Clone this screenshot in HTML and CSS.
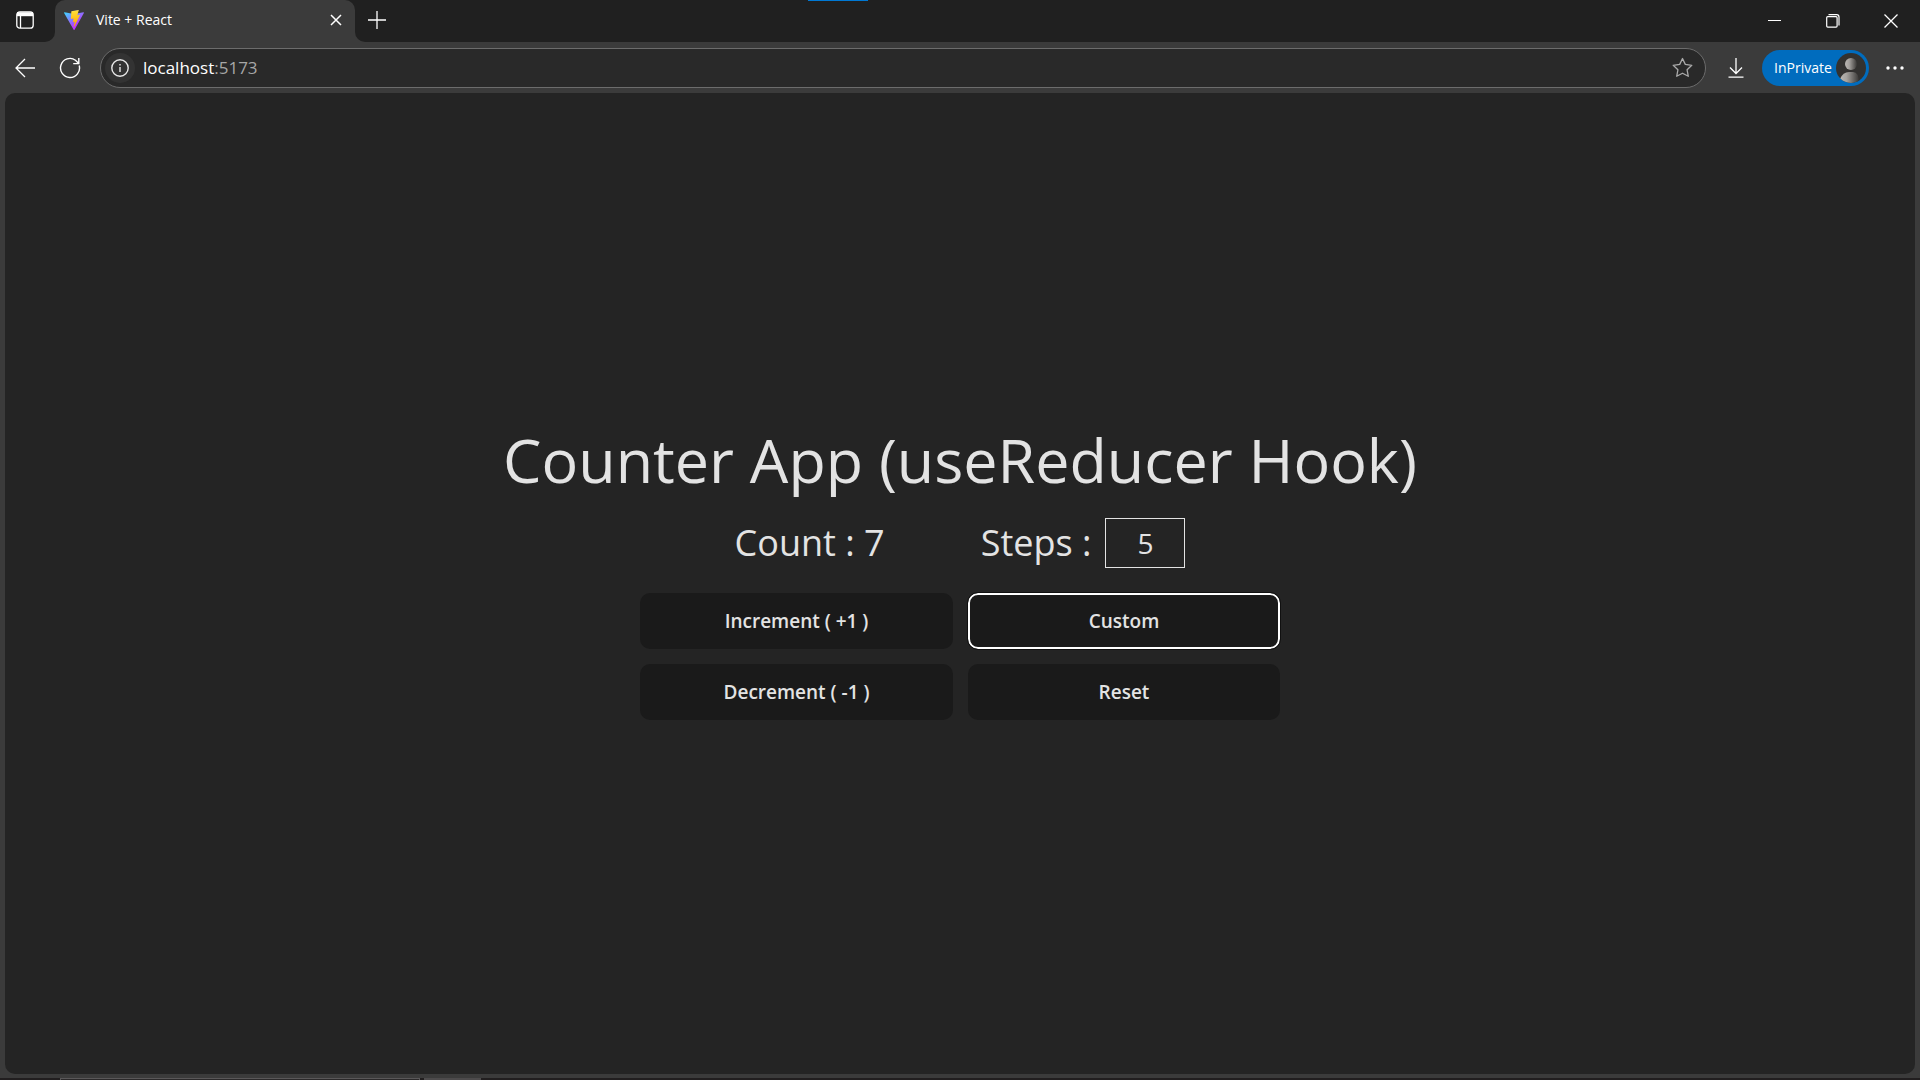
FILE: index.html
```html
<!DOCTYPE html>
<html lang="en">
<head>
<meta charset="utf-8">
<meta name="viewport" content="width=device-width, initial-scale=1">
<title>Vite + React</title>
<link rel="stylesheet" href="styles.css">
</head>
<body>
<div class="browser">
  <header class="tabbar">
    <div class="actions">
      <button class="icon-btn" aria-label="Tab actions">
        <svg width="18" height="18" viewBox="0 0 18 18" fill="none" stroke="#fff" stroke-width="1.3"><rect x=".8" y=".8" width="16.4" height="16.4" rx="3"/><path d="M1 3.2h16" stroke-width="4"/><path d="M4.5 5v12"/></svg>
      </button>
    </div>
    <div class="tab">
      <svg class="favicon" width="20" height="20" viewBox="0 0 256 257">
        <defs>
          <linearGradient id="va" x1="-1%" x2="58%" y1="8%" y2="79%"><stop offset="0" stop-color="#41d1ff"/><stop offset="1" stop-color="#bd34fe"/></linearGradient>
          <linearGradient id="vb" x1="43%" x2="50%" y1="2%" y2="89%"><stop offset="0" stop-color="#ffea83"/><stop offset=".08" stop-color="#ffdd35"/><stop offset="1" stop-color="#ffa800"/></linearGradient>
        </defs>
        <path fill="url(#va)" d="M255.153 37.938 134.897 252.976c-2.483 4.44-8.862 4.466-11.382.048L.875 37.958c-2.746-4.814 1.371-10.646 6.827-9.67l120.385 21.517a6.537 6.537 0 0 0 2.322-.004l117.867-21.483c5.438-.991 9.574 4.796 6.877 9.62Z"/>
        <path fill="url(#vb)" d="M185.432.063 96.44 17.501a3.268 3.268 0 0 0-2.634 3.014l-5.474 92.456a3.268 3.268 0 0 0 3.997 3.378l24.777-5.718c2.318-.535 4.413 1.507 3.936 3.838l-7.361 36.047c-.495 2.426 1.782 4.5 4.151 3.78l15.304-4.649c2.372-.72 4.652 1.36 4.15 3.788l-11.698 56.621c-.732 3.542 3.979 5.473 5.943 2.437l1.313-2.028 72.516-144.72c1.215-2.423-.88-5.186-3.54-4.672l-25.505 4.922c-2.396.462-4.435-1.77-3.759-4.114l16.646-57.705c.677-2.35-1.37-4.583-3.769-4.113Z"/>
      </svg>
      <span class="tab-title">Vite + React</span>
      <button class="icon-btn" aria-label="Close tab">
        <svg width="12" height="12" viewBox="0 0 12 12" stroke="#fff" stroke-width="1.5"><path d="m1 1 10 10M11 1 1 11"/></svg>
      </button>
    </div>
    <button class="icon-btn new-tab" aria-label="New tab">
      <svg width="18" height="18" viewBox="0 0 18 18" stroke="#fff" stroke-width="1.3"><path d="M9 0v18M0 9h18"/></svg>
    </button>
    <div class="window-controls">
      <button class="icon-btn" aria-label="Minimize"><svg width="14" height="14" viewBox="0 0 14 14" stroke="#fff"><path d="M0 6.5h13"/></svg></button>
      <button class="icon-btn" aria-label="Restore"><svg width="14" height="14" viewBox="0 0 14 14" fill="none" stroke="#fff" stroke-width="1.2"><rect x=".7" y="2.7" width="10.4" height="10.4" rx="1"/><path d="M2.5.7h8.2q2.3 0 2.3 2.3v8.5"/></svg></button>
      <button class="icon-btn" aria-label="Close"><svg width="14" height="14" viewBox="0 0 14 14" stroke="#fff" stroke-width="1.3"><path d="m.5.5 13 13M13.5.5l-13 13"/></svg></button>
    </div>
    <span class="snap-mark"></span>
  </header>

  <nav class="toolbar">
    <button class="icon-btn" aria-label="Back"><svg width="20" height="20" viewBox="0 0 20 20" fill="none" stroke="#fff" stroke-width="1.3"><path d="M20 10H.8M10 1 1 10l9 9"/></svg></button>
    <button class="icon-btn refresh" aria-label="Refresh"><svg width="22" height="22" viewBox="0 0 22 22" fill="none" stroke="#fff" stroke-width="1.4"><path d="M20.2 8.5A9.5 9.5 0 1 1 16.5 3.2L19.5 6.2M19.8 1v5.6h-5.6"/></svg></button>
    <div class="address">
      <button class="site-info" aria-label="Site information"><svg width="18" height="18" viewBox="0 0 18 18" fill="none" stroke="#e8e8e8" stroke-width="1.4"><circle cx="9" cy="9" r="8.2"/><path d="M9 8v5M9 5v1.6"/></svg></button>
      <a class="url" href="#">localhost<span class="port">:5173</span></a>
      <button class="icon-btn" aria-label="Add to favorites"><svg width="21" height="21" viewBox="0 0 21 21" fill="none" stroke="#aaa" stroke-width="1.3" stroke-linejoin="round"><path d="m10.5 1.5 2.8 5.9 6.5.9-4.7 4.5 1.2 6.5-5.8-3.1-5.8 3.1 1.2-6.5L1.2 8.3l6.5-.9Z"/></svg></button>
    </div>
    <button class="icon-btn download" aria-label="Downloads"><svg width="16" height="20" viewBox="0 0 16 20" fill="none" stroke="#fff" stroke-width="1.3"><path d="M8 0v15M2 9.5l6 6 6-6M.5 19.2h15"/></svg></button>
    <button class="profile">InPrivate
      <svg width="30" height="30" viewBox="0 0 30 30">
        <defs><linearGradient id="pg"><stop offset="0" stop-color="#bbb8b4"/><stop offset=".35" stop-color="#a5a29e"/><stop offset="1" stop-color="#383735"/></linearGradient><clipPath id="pc"><circle cx="15" cy="15" r="15"/></clipPath></defs>
        <circle cx="15" cy="15" r="15" fill="#333230"/><g fill="url(#pg)" clip-path="url(#pc)"><circle cx="15" cy="11" r="6"/><path d="M4 26q3-7 9-7h4q6 0 6 11H4Z"/></g>
      </svg>
    </button>
    <button class="icon-btn more" aria-label="Settings and more"><svg width="18" height="4" viewBox="0 0 18 4" fill="#fff"><circle cx="2" cy="2" r="1.7"/><circle cx="9" cy="2" r="1.7"/><circle cx="16" cy="2" r="1.7"/></svg></button>
  </nav>

  <main class="page">
    <h1>Counter App (useReducer Hook)</h1>
    <div class="values">
      <p class="count">Count : 7</p>
      <div class="steps"><label for="steps">Steps :</label><input id="steps" type="text" value="5"></div>
    </div>
    <div class="buttons">
      <button>Increment ( +1 )</button>
      <button class="focused">Custom</button>
      <button>Decrement ( -1 )</button>
      <button>Reset</button>
    </div>
  </main>
  <footer class="taskbar"><span class="task wide"></span><span class="task"></span></footer>
</div>
</body>
</html>
```
FILE: styles.css
```css
* { box-sizing: border-box; }
body { margin: 0; background: #3b3b3b; color: #fff; font-family: "Segoe UI", "Open Sans", sans-serif; }
button, input { font: inherit; color: inherit; }
.browser { min-height: 100vh; display: flex; flex-direction: column; }
.icon-btn { display: flex; align-items: center; justify-content: center; padding: 0; border: 0; background: none; flex: none; }

.tabbar { position: relative; display: flex; height: 42px; background: #3b3b3b; }
.actions { width: 55px; background: #202020; border-bottom-right-radius: 10px; display: flex; padding: 0 0 2px 16px; }
.tab { width: 300px; display: flex; align-items: center; padding: 0 13px 2px 9px; gap: 12px; background: #3b3b3b; }
.tabbar::before { content: ""; position: absolute; inset: 0 0 20px; background: #202020; }
.actions, .tab, .new-tab, .window-controls { position: relative; }
.tab { border-radius: 10px 10px 0 0; }
.tab-title { flex: 1; font-size: 14px; line-height: 20px; }
.new-tab { width: 44px; padding: 0 0 2px; background: #202020; border-bottom-left-radius: 10px; }
.window-controls { flex: 1; display: flex; justify-content: flex-end; gap: 44px; padding-right: 22px; background: #202020; }
.snap-mark { position: absolute; left: 42.1%; top: 0; width: 60px; height: 1px; background: #0078d4; }

.toolbar { display: flex; align-items: center; height: 51px; padding: 0 16px 0 15px; }
.refresh { margin-left: 24px; }
.address { flex: 1; display: flex; align-items: center; height: 40px; margin: 0 22px 0 19px; padding: 0 12px 0 4px; border: 1px solid #6c6c6c; border-radius: 20px; background: #292929; }
.site-info { display: grid; place-items: center; width: 30px; height: 30px; padding: 0; border: 0; border-radius: 50%; background: #333; }
.url { flex: 1; margin-left: 8px; font-size: 17px; line-height: 24px; color: #fff; text-decoration: none; }
.port { color: #a6a6a6; }
.profile { display: flex; align-items: center; justify-content: space-between; width: 107px; height: 36px; margin: 0 17px 0 18px; padding: 0 3px 0 12px; border: 0; border-radius: 18px; background: #006cbe; font-size: 14px; }

.page { flex: 1; display: flex; flex-direction: column; align-items: center; justify-content: center; margin: 0 5px 4px; background: #242424; border-radius: 10px; color: #e3e3e3; }
h1 { margin: 0; font-size: 61px; font-weight: 400; line-height: 96px; }
.values { display: flex; align-items: center; gap: 96px; margin-top: 10px; }
.count { margin: 0; }
.count, .steps { font-size: 36px; line-height: 48px; }
.steps { display: flex; align-items: center; gap: 14px; }
.steps input { width: 80px; height: 50px; padding: 0; border: 1px solid #e3e3e3; border-radius: 0; background: none; font-size: 28px; text-align: center; }
.buttons { display: grid; grid-template-columns: 313px 312px; gap: 15px; margin: 25px 0 36px; }
.buttons button { height: 56px; border: 0; border-radius: 10px; background: #1a1a1a; font-size: 19px; font-weight: 600; }
.buttons .focused { border: 2px solid #fff; outline: 1px solid #101010; }

.taskbar { display: flex; gap: 4px; height: 2px; padding-left: 60px; background: #211e1f; }
.task { width: 57px; background: #4d4b4c; }
.wide { width: 360px; border: 1px solid #5a5859; border-bottom: 0; background: #2b292a; }
```
